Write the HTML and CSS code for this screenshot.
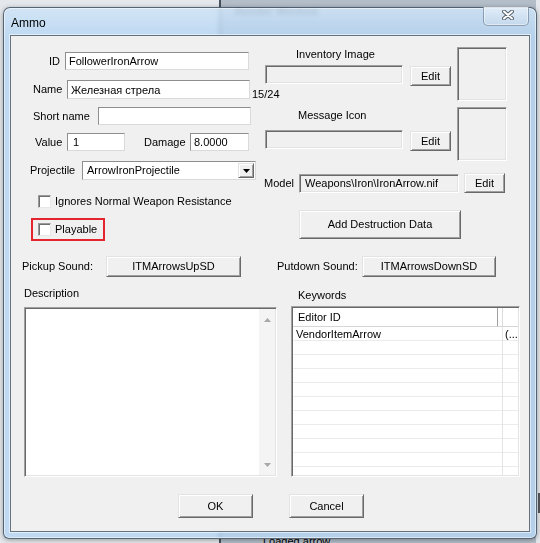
FILE: index.html
```html
<!DOCTYPE html>
<html>
<head>
  <meta charset="UTF-8">
  <title>Ammo</title>
  <link rel="stylesheet" href="styles.css">
</head>
<body>
  <div class="desk">
    <div class="render-win">
      <div class="render-title">Render Window</div>
      <div class="render-status">Loaded arrow</div>
    </div>
    <div class="edge-bar"></div>

    <div class="dialog">
      <div class="titlebar">
        <span class="title">Ammo</span>
        <button class="close" title="Close">
          <svg width="12" height="10" viewBox="0 0 12 10">
            <path d="M2 1.5 L10 8.5 M10 1.5 L2 8.5" stroke="#56606b" stroke-width="4" stroke-linecap="round"/>
            <path d="M2 1.5 L10 8.5 M10 1.5 L2 8.5" stroke="#fff" stroke-width="2" stroke-linecap="round"/>
          </svg>
        </button>
      </div>

      <div class="client">
        <div class="top">
          <!-- basic fields -->
          <div class="left-col">
            <div class="field f-id">
              <label class="lbl">ID</label>
              <input class="edit" type="text" value="FollowerIronArrow">
            </div>
            <div class="field f-name">
              <label class="lbl">Name</label>
              <input class="edit" type="text" value="Железная стрела">
              <span class="counter">15/24</span>
            </div>
            <div class="field f-short">
              <label class="lbl">Short name</label>
              <input class="edit" type="text" value="">
            </div>
            <div class="field f-value">
              <label class="lbl">Value</label>
              <input class="edit edit-value" type="text" value="1">
              <label class="lbl lbl-damage">Damage</label>
              <input class="edit edit-damage" type="text" value="8.0000">
            </div>
            <div class="field f-proj">
              <label class="lbl">Projectile</label>
              <div class="combo">
                <span class="combo-text">ArrowIronProjectile</span>
                <span class="combo-btn">
                  <svg width="7" height="4" viewBox="0 0 7 4"><polygon points="0,0 7,0 3.5,4" fill="#000"/></svg>
                </span>
              </div>
            </div>
            <div class="check-row">
              <input class="check" type="checkbox">
              <span>Ignores Normal Weapon Resistance</span>
            </div>
            <div class="check-row playable">
              <input class="check" type="checkbox">
              <span>Playable</span>
            </div>
          </div>

          <!-- art and model -->
          <div class="right-col">
            <div class="images">
              <div class="img-fields">
                <div class="img-label">Inventory Image</div>
                <div class="img-row">
                  <input class="path" type="text" value="" disabled>
                  <button class="btn-edit">Edit</button>
                </div>
                <div class="img-label img-label-msg">Message Icon</div>
                <div class="img-row img-row-msg">
                  <input class="path" type="text" value="" disabled>
                  <button class="btn-edit">Edit</button>
                </div>
              </div>
              <div class="previews">
                <div class="preview"></div>
                <div class="preview"></div>
              </div>
            </div>
            <div class="model-row">
              <label class="lbl lbl-model">Model</label>
              <input class="path model-path" type="text" value="Weapons\Iron\IronArrow.nif" readonly>
              <button class="btn-edit">Edit</button>
            </div>
            <button class="btn-destruction">Add Destruction Data</button>
          </div>
        </div>

        <div class="sounds">
          <label class="lbl lbl-pickup">Pickup Sound:</label>
          <button class="btn-sound btn-pickup">ITMArrowsUpSD</button>
          <label class="lbl lbl-putdown">Putdown Sound:</label>
          <button class="btn-sound btn-putdown">ITMArrowsDownSD</button>
        </div>

        <div class="lower">
          <div class="desc-col">
            <div class="group-label">Description</div>
            <div class="desc-box">
              <div class="vscroll">
                <svg width="7" height="4" viewBox="0 0 7 4"><polygon points="0,4 7,4 3.5,0" fill="#a8a8a8"/></svg>
                <svg width="7" height="4" viewBox="0 0 7 4"><polygon points="0,0 7,0 3.5,4" fill="#a8a8a8"/></svg>
              </div>
            </div>
          </div>
          <div class="kw-col">
            <div class="group-label kw-label">Keywords</div>
            <div class="kw-list">
              <div class="kw-head">
                <span class="kw-head-id">Editor ID</span>
                <span class="kw-head-flag"></span>
              </div>
              <div class="kw-rows">
                <div class="kw-row">
                  <span class="kw-name">VendorItemArrow</span>
                  <span class="kw-flag">(...</span>
                </div>
              </div>
            </div>
          </div>
        </div>

        <div class="actions">
          <button class="btn-action">OK</button>
          <button class="btn-action">Cancel</button>
        </div>
      </div>
    </div>
  </div>
</body>
</html>
```

FILE: styles.css
```css
* {
  box-sizing: border-box;
}

body {
  margin: 0;
  font-family: "Liberation Sans", Arial, sans-serif;
  font-size: 11px;
  line-height: 13px;
  color: #000;
}

/* desktop behind the dialog */
.desk {
  position: relative;
  width: 540px;
  height: 543px;
  overflow: hidden;
  background: #e4e8ec;
}

.render-win {
  position: absolute;
  left: 219px;
  top: 0;
  width: 317px;
  height: 543px;
  background: #b3bec9;
  border-left: 2px solid #47515b;
}

.render-title {
  padding: 5px 0 0 14px;
  font-weight: bold;
  color: #1e2a36;
}

.render-status {
  position: absolute;
  left: 42px;
  top: 535px;
}

.edge-bar {
  position: absolute;
  right: 0;
  top: 493px;
  width: 2px;
  height: 20px;
  background: #55595e;
}

/* dialog window */
.dialog {
  position: absolute;
  left: 3px;
  top: 7px;
  width: 534px;
  height: 532px;
  display: flex;
  flex-direction: column;
  padding: 0 6px 6px 6px;
  border: 1px solid rgba(40, 50, 62, 0.7);
  border-radius: 7px 7px 6px 6px;
  background: linear-gradient(to bottom, rgba(255, 255, 255, 0.3), rgba(255, 255, 255, 0) 30px), rgba(180, 212, 242, 0.8);
  backdrop-filter: blur(2px);
  box-shadow: 0 1px 5px rgba(0, 0, 0, 0.35), inset 0 0 0 1px rgba(255, 255, 255, 0.5);
}

.titlebar {
  height: 27px;
  display: flex;
  align-items: flex-start;
}

.title {
  padding: 8px 0 0 1px;
  font-size: 12px;
  line-height: 14px;
}

.close {
  margin: -1px 1px 0 auto;
  width: 46px;
  height: 19px;
  display: flex;
  align-items: flex-start;
  padding: 3px 0 0 18px;
  border: 1px solid rgba(80, 100, 122, 0.55);
  border-top: none;
  border-radius: 0 0 5px 5px;
  background: linear-gradient(to bottom, rgba(232, 241, 250, 0.75), rgba(200, 218, 236, 0.55));
  box-shadow: inset 0 0 0 1px rgba(255, 255, 255, 0.45);
}

.client {
  flex: 1;
  background: #f0f0f0;
  border: 1px solid #65717d;
  box-shadow: 0 0 0 1px rgba(255, 255, 255, 0.55);
}

/* shared control looks */
input,
button {
  font: inherit;
  color: #000;
  margin: 0;
}

button {
  padding: 0;
  background: #f0f0f0;
  border: 1px solid;
  border-color: #e3e3e3 #696969 #696969 #e3e3e3;
  box-shadow: inset 1px 1px #fff, inset -1px -1px #a0a0a0;
}

.edit {
  flex: none;
  height: 100%;
  padding: 0 3px;
  background: #fff;
  border: 1px solid;
  border-color: #8e8e8e #dadada #dadada #8e8e8e;
  outline: none;
}

.path {
  flex: none;
  height: 19px;
  padding: 0 4px;
  background: #f0f0f0;
  border: 1px solid;
  border-color: #a0a0a0 #fff #fff #a0a0a0;
  box-shadow: inset 1px 1px #696969, inset -1px -1px #e3e3e3;
  outline: none;
}

.lbl {
  flex: none;
}

/* top block */
.top {
  display: flex;
  align-items: flex-start;
  padding-top: 11px;
}

.left-col {
  margin: 5px 0 0 11px;
  width: 234px;
  flex: none;
}

.field {
  display: flex;
  align-items: center;
}

.f-id {
  height: 18px;
}

.f-id .lbl {
  width: 43px;
  padding-left: 27px;
}

.f-id .edit {
  width: 184px;
}

.f-name {
  height: 19px;
  margin-top: 10px;
}

.f-name .lbl {
  width: 45px;
  padding-left: 11px;
}

.f-name .edit {
  width: 183px;
}

.counter {
  flex: none;
  align-self: flex-end;
  margin: 0 0 -2px 2px;
}

.f-short {
  height: 18px;
  margin-top: 8px;
}

.f-short .lbl {
  width: 76px;
  padding-left: 11px;
}

.f-short .edit {
  width: 153px;
}

.f-value {
  height: 18px;
  margin-top: 8px;
}

.f-value .lbl {
  width: 45px;
  padding-left: 13px;
}

.f-value .edit-value {
  width: 58px;
  padding-left: 5px;
}

.f-value .lbl-damage {
  width: 65px;
  padding-left: 19px;
}

.f-value .edit-damage {
  width: 59px;
}

.f-proj {
  height: 19px;
  margin-top: 10px;
}

.f-proj .lbl {
  width: 60px;
  padding-left: 8px;
}

.combo {
  flex: none;
  width: 174px;
  height: 19px;
  display: flex;
  align-items: stretch;
  background: #fff;
  border: 1px solid;
  border-color: #8e8e8e #dadada #dadada #8e8e8e;
  padding: 1px;
}

.combo-text {
  flex: 1;
  padding-left: 3px;
  line-height: 15px;
}

.combo-btn {
  width: 16px;
  display: flex;
  align-items: center;
  justify-content: center;
  background: #f0f0f0;
  border: 1px solid;
  border-color: #e3e3e3 #696969 #696969 #e3e3e3;
  box-shadow: inset 1px 1px #fff, inset -1px -1px #a0a0a0;
}

.check-row {
  display: flex;
  align-items: center;
  gap: 4px;
  height: 13px;
  margin: 15px 0 0 16px;
}

.check {
  appearance: none;
  flex: none;
  width: 13px;
  height: 13px;
  background: #fff;
  border: 1px solid;
  border-color: #9a9a9a #e8e8e8 #e8e8e8 #9a9a9a;
  box-shadow: inset 1px 1px #6f6f6f;
}

.playable {
  width: 74px;
  height: 23px;
  margin: 10px 0 0 9px;
  padding-left: 5px;
  border: 2px solid #e3262e;
}

/* right column */
.right-col {
  margin-left: 8px;
  width: 243px;
  flex: none;
}

.images {
  display: flex;
}

.img-fields {
  width: 187px;
  flex: none;
}

.img-label {
  margin-top: 1px;
  padding-left: 32px;
}

.img-label-msg {
  margin-top: 23px;
  padding-left: 34px;
}

.img-row {
  display: flex;
  align-items: flex-start;
  height: 21px;
  margin-top: 4px;
}

.img-row-msg {
  margin-top: 8px;
}

.img-row .path {
  width: 138px;
  margin-left: 1px;
}

.btn-edit {
  flex: none;
  width: 41px;
  height: 20px;
}

.img-row .btn-edit {
  margin: 1px 0 0 7px;
}

.previews {
  margin-left: 6px;
  display: flex;
  flex-direction: column;
  gap: 6px;
}

.preview {
  width: 50px;
  height: 54px;
  border: 1px solid;
  border-color: #a0a0a0 #fff #fff #a0a0a0;
  box-shadow: inset 1px 1px #696969, inset -1px -1px #e3e3e3;
}

.model-row {
  display: flex;
  align-items: center;
  height: 20px;
  margin-top: 12px;
}

.lbl-model {
  width: 35px;
}

.model-path {
  width: 160px;
  padding-left: 5px;
}

.model-row .btn-edit {
  margin-left: 5px;
}

.btn-destruction {
  display: block;
  width: 162px;
  height: 29px;
  margin: 17px 0 0 35px;
}

/* sound pickers */
.sounds {
  display: flex;
  align-items: center;
  height: 21px;
  margin-top: 15px;
  padding-left: 11px;
}

.lbl-pickup {
  width: 84px;
}

.btn-sound {
  flex: none;
  height: 21px;
}

.btn-pickup {
  width: 135px;
}

.lbl-putdown {
  width: 85px;
  margin-left: 36px;
}

.btn-putdown {
  width: 134px;
}

/* description and keywords */
.lower {
  display: flex;
  align-items: flex-start;
  margin-top: 10px;
}

.desc-col {
  width: 253px;
  margin-left: 13px;
  flex: none;
}

.desc-box {
  height: 170px;
  margin-top: 7px;
  display: flex;
  justify-content: flex-end;
  padding: 1px;
  background: #fff;
  border: 1px solid;
  border-color: #a0a0a0 #fff #fff #a0a0a0;
  box-shadow: inset 1px 1px #696969, inset -1px -1px #e3e3e3;
}

.vscroll {
  width: 16px;
  display: flex;
  flex-direction: column;
  align-items: center;
  justify-content: space-between;
  padding: 9px 0 8px;
  background: #f4f4f4;
}

.kw-col {
  width: 229px;
  margin-left: 14px;
  flex: none;
}

.kw-label {
  margin-top: 2px;
  padding-left: 7px;
}

.kw-list {
  height: 171px;
  margin-top: 4px;
  padding: 1px;
  overflow: hidden;
  background: #fff;
  border: 1px solid;
  border-color: #a0a0a0 #fff #fff #a0a0a0;
  box-shadow: inset 1px 1px #696969, inset -1px -1px #e3e3e3;
}

.kw-head {
  display: flex;
  height: 19px;
  border-bottom: 1px solid #d5d5d5;
}

.kw-head-id {
  width: 205px;
  flex: none;
  padding: 3px 0 0 5px;
  border-right: 1px solid #a0a0a0;
}

.kw-head-flag {
  flex: 1;
  margin-left: 4px;
  border-left: 1px solid #dcdcdc;
}

.kw-rows {
  height: 150px;
  background:
    linear-gradient(to right, transparent 209px, #e4e4e4 209px, #e4e4e4 210px, transparent 210px),
    repeating-linear-gradient(to bottom, transparent 0, transparent 13px, #ebebeb 13px, #ebebeb 14px);
}

.kw-row {
  display: flex;
  height: 14px;
}

.kw-name {
  width: 210px;
  flex: none;
  padding: 1px 0 0 3px;
}

.kw-flag {
  padding: 1px 0 0 2px;
}

/* dialog buttons */
.actions {
  display: flex;
  justify-content: center;
  gap: 36px;
  margin-top: 17px;
  padding-left: 2px;
}

.btn-action {
  width: 75px;
  height: 24px;
}
```
